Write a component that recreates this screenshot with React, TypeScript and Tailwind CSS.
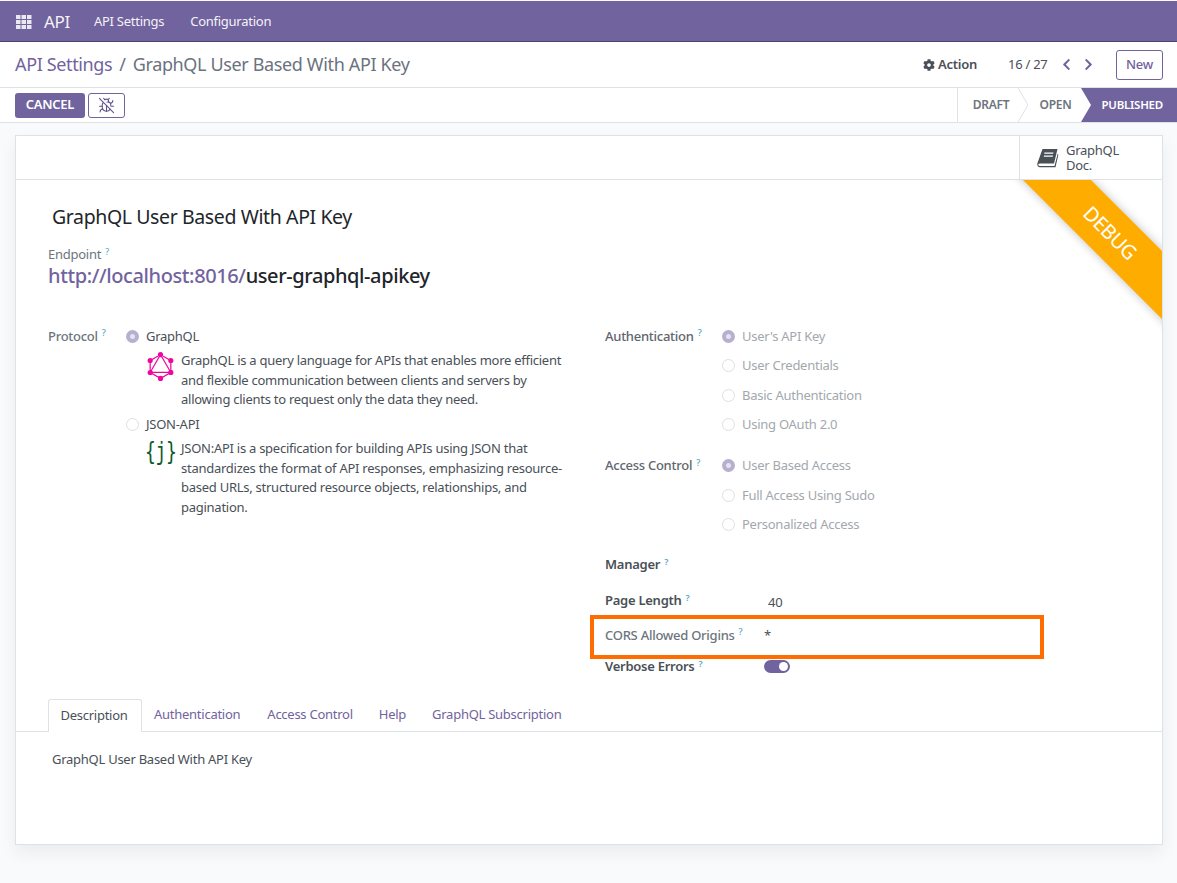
import React from "react";
import { BugOff } from "lucide-react";
import { FaCog, FaChevronLeft, FaChevronRight } from "react-icons/fa";
import { SiGraphql } from "react-icons/si";

const Help = () => <sup className="ml-[4px] text-[9px] leading-none text-[#4fa8c4]">?</sup>;

const Radio = ({ on }: { on?: boolean }) =>
  on ? (
    <span className="inline-flex w-[13px] h-[13px] shrink-0 rounded-full bg-[#b7afd0] items-center justify-center">
      <span className="w-[5px] h-[5px] rounded-full bg-[#e6e3ee]" />
    </span>
  ) : (
    <span className="inline-block w-[13px] h-[13px] shrink-0 rounded-full border border-[#dcdfe3] bg-white" />
  );

const Opt = ({ on, label, muted }: { on?: boolean; label: string; muted?: boolean }) => (
  <div className="flex items-center h-[19.5px]">
    <Radio on={on} />
    <span className={`ml-[7px] whitespace-nowrap ${muted ? "text-[#a3a8ad]" : "text-[#495057]"}`}>{label}</span>
  </div>
);

const BookIcon = () => (
  <svg width="22" height="20" viewBox="0 0 22 20" className="shrink-0">
    <path d="M5.5 1 H20.5 L17 15.5 H3.2 Q1.6 15.5 1.2 16.5 Q1.4 18 3.2 18 H17.5 L20.6 6 L21.4 6.6 L18.5 19.2 H3 Q0 19 .3 15.5 Z" fill="#495057" />
    <rect x="7.4" y="4.4" width="9" height="1.4" fill="#fff" transform="skewX(-12) translate(1 0)" />
    <rect x="6.6" y="7.4" width="9" height="1.4" fill="#fff" transform="skewX(-12) translate(2 0)" />
  </svg>
);

const GridIcon = () => (
  <svg width="16" height="14" viewBox="0 0 16 14" fill="#e9e7f0">
    {[0, 5.5, 11].map((x) =>
      [0, 5, 10].map((y) => <rect key={`${x}-${y}`} x={x} y={y} width="4.5" height="4" />)
    )}
  </svg>
);

const JsonLogo = () => (
  <div className="w-[29px] shrink-0 flex justify-center whitespace-nowrap">
    <span className="inline-block scale-x-[0.72] text-[#0d5a2c] text-[25px] leading-[26px] font-['DejaVu_Sans_Mono',monospace]">
      {"{j}"}
    </span>
  </div>
);

const Tab = ({ label, className }: { label: string; className: string }) => (
  <div className={`flex items-center text-[#71639e] h-[32px] ${className}`}>{label}</div>
);

export default function App() {
  return (
    <div className="min-h-[883px] bg-[#f9fafb] text-[13px] leading-[19.5px] text-[#495057] font-['Noto_Sans',sans-serif] flex flex-col [&_*]:tracking-[-0.02em]">
      {/* nav */}
      <div className="h-[41px] mt-[1px] pt-[2px] bg-[#71639e] border-b border-[#4d4370] flex items-center pl-[16px] text-[#f3f2f7] shrink-0">
        <GridIcon />
        <span className="ml-[12px] text-[17px]">API</span>
        <span className="ml-[24px]">API Settings</span>
        <span className="ml-[26px]">Configuration</span>
      </div>

      {/* breadcrumb */}
      <div className="h-[46px] bg-white border-b border-[#dee2e6] flex items-center pl-[15px] pr-[14px] shrink-0">
        <span className="text-[18px] text-[#71639e]">API Settings</span>
        <span className="text-[18px] text-[#6b7280] ml-[7px]">/</span>
        <span className="text-[18px] text-[#6b7280] ml-[7px]">GraphQL User Based With API Key</span>
        <span className="ml-auto flex items-center font-semibold text-[#495057]">
          <FaCog className="w-[12px] h-[12px] mr-[3px]" />
          Action
        </span>
        <span className="ml-[31px] w-[40px] text-[#495057]">16 / 27</span>
        <FaChevronLeft className="ml-[14px] w-[9px] h-[13px] text-[#71639e]" />
        <FaChevronRight className="ml-[13px] w-[9px] h-[13px] text-[#71639e]" />
        <button className="ml-[23px] w-[47px] h-[30px] rounded-[3px] border border-[#71639e] text-[#71639e] font-medium bg-white">New</button>
      </div>

      {/* status row */}
      <div className="h-[35px] bg-white border-b border-[#dee2e6] flex items-center pl-[15px] shrink-0">
        <button className="w-[70px] h-[25px] rounded-[3px] bg-[#71639e] text-white text-[13px] font-semibold">CANCEL</button>
        <button className="ml-[3px] w-[37px] h-[25px] rounded-[3px] border border-[#71639e] bg-white flex items-center justify-center text-[#5f5389]">
          <BugOff className="w-[17px] h-[17px]" strokeWidth={1.5} />
        </button>
        <div className="ml-auto flex self-stretch text-[12px] font-semibold">
          <div className="w-[71px] border-l border-[#dee2e6] flex items-center justify-center text-[#6c757d] pr-[4px]">DRAFT</div>
          <svg width="10" height="34" viewBox="0 0 10 34" className="shrink-0 -ml-[10px]">
            <path d="M0 0 L10 17 L0 34" fill="none" stroke="#dee2e6" />
          </svg>
          <div className="w-[53px] flex items-center justify-center text-[#6c757d] pl-[2px]">OPEN</div>
          <div className="w-[96px] flex items-center justify-end pr-[14px] bg-[#71639e] text-white text-[11.5px] [clip-path:polygon(0_0,100%_0,100%_100%,0_100%,10px_50%)]">PUBLISHED</div>
        </div>
      </div>

      {/* card */}
      <div className="relative mx-[15px] mt-[12px] mr-[14px] h-[710px] bg-white border border-[#dee2e6] shadow-[0_8px_16px_rgba(0,0,0,0.06)] shrink-0">
        <div className="h-[44px] border-b border-[#dee2e6] flex justify-end">
          <div className="w-[143px] border-l border-[#dee2e6] flex items-center pl-[17px] leading-[15px] text-[#495057]">
            <BookIcon />
            <span className="ml-[7px] w-[60px]">GraphQL Doc.</span>
          </div>
        </div>

        {/* ribbon */}
        <div className="absolute top-[44px] right-0 w-[160px] h-[160px] overflow-hidden pointer-events-none">
          <div className="absolute left-[-42px] top-[29px] w-[300px] h-[48px] rotate-45 bg-[#ffac00] shadow-[0_0_10px_rgba(0,0,0,0.25)] flex items-center justify-center text-white text-[20px]">
            DEBUG
          </div>
        </div>

        <div className="px-[32px]">
          <h1 className="mt-[22px] ml-[4px] text-[19.5px] leading-[30px] text-[#212529]">GraphQL User Based With API Key</h1>
          <div className="mt-[13px] text-[#6c757d]">Endpoint<Help /></div>
          <div className="text-[20px] leading-[26px] font-medium -mt-[2px]">
            <span className="text-[#71639e]">http://localhost:8016/</span><span className="text-[#212529]">user-graphql-apikey</span>
          </div>

          <div className="flex mt-[38px]">
            {/* left */}
            <div className="w-[557px] flex shrink-0">
              <div className="w-[78px] font-medium text-[#6c757d] shrink-0">Protocol<Help /></div>
              <div>
                <Opt on label="GraphQL" />
                <div className="flex mt-[5px] ml-[20px]">
                  <SiGraphql className="w-[29px] h-[29px] text-[#f0069f] shrink-0 mt-[1px]" />
                  <p className="ml-[6px] whitespace-nowrap">
                    GraphQL is a query language for APIs that enables more efficient<br />
                    and flexible communication between clients and servers by<br />
                    allowing clients to request only the data they need.
                  </p>
                </div>
                <div className="mt-[5px]"><Opt label="JSON-API" /></div>
                <div className="flex mt-[5px] ml-[20px]">
                  <JsonLogo />
                  <p className="ml-[6px] whitespace-nowrap">
                    JSON:API is a specification for building APIs using JSON that<br />
                    standardizes the format of API responses, emphasizing resource-<br />
                    based URLs, structured resource objects, relationships, and<br />
                    pagination.
                  </p>
                </div>
              </div>
            </div>

            {/* right */}
            <div className="flex-1">
              <div className="flex">
                <div className="w-[117px] font-medium text-[#5f666d] shrink-0">Authentication<Help /></div>
                <div className="flex flex-col gap-[10px]">
                  <Opt on muted label="User's API Key" />
                  <Opt muted label="User Credentials" />
                  <Opt muted label="Basic Authentication" />
                  <Opt muted label="Using OAuth 2.0" />
                </div>
              </div>
              <div className="flex mt-[21.5px]">
                <div className="w-[117px] font-medium text-[#5f666d] shrink-0">Access Control<Help /></div>
                <div className="flex flex-col gap-[10px]">
                  <Opt on muted label="User Based Access" />
                  <Opt muted label="Full Access Using Sudo" />
                  <Opt muted label="Personalized Access" />
                </div>
              </div>
              <div className="mt-[20.5px] font-semibold text-[#495057]">Manager<Help /></div>
              <div className="flex mt-[16.5px]">
                <div className="w-[163px] font-semibold text-[#495057] shrink-0">Page Length<Help /></div>
                <div className="pt-[2px]">40</div>
              </div>
              <div className="flex items-center h-[44px] w-[454px] -ml-[15px] pl-[15px] pb-[2px] mt-[2px] border-[4px] border-[#ff6d00] -mb-[1.5px] box-border">
                <div className="w-[155px] -ml-[4px] font-medium text-[#6c757d] shrink-0">CORS Allowed Origins<Help /></div>
                <div className="ml-[4px]">*</div>
              </div>
              <div className="flex items-center">
                <div className="w-[159px] font-semibold text-[#495057] shrink-0">Verbose Errors<Help /></div>
                <span className="w-[26px] h-[13px] rounded-full bg-[#71639e] flex items-center justify-end pr-[2px]">
                  <span className="w-[9px] h-[9px] rounded-full bg-white" />
                </span>
              </div>
            </div>
          </div>
        </div>

        {/* tabs */}
        <div className="mt-[22px] h-[33px] border-b border-[#dee2e6] flex pl-[32px]">
          <div className="w-[94px] h-[33px] pr-[2px] bg-white border border-b-0 border-[#dee2e6] rounded-t-[3px] flex items-center justify-center">Description</div>
          <Tab label="Authentication" className="ml-[12px]" />
          <Tab label="Access Control" className="ml-[27px]" />
          <Tab label="Help" className="ml-[26px]" />
          <Tab label="GraphQL Subscription" className="ml-[26px]" />
        </div>
        <div className="mt-[18px] ml-[36px]">GraphQL User Based With API Key</div>
      </div>
    </div>
  );
}
